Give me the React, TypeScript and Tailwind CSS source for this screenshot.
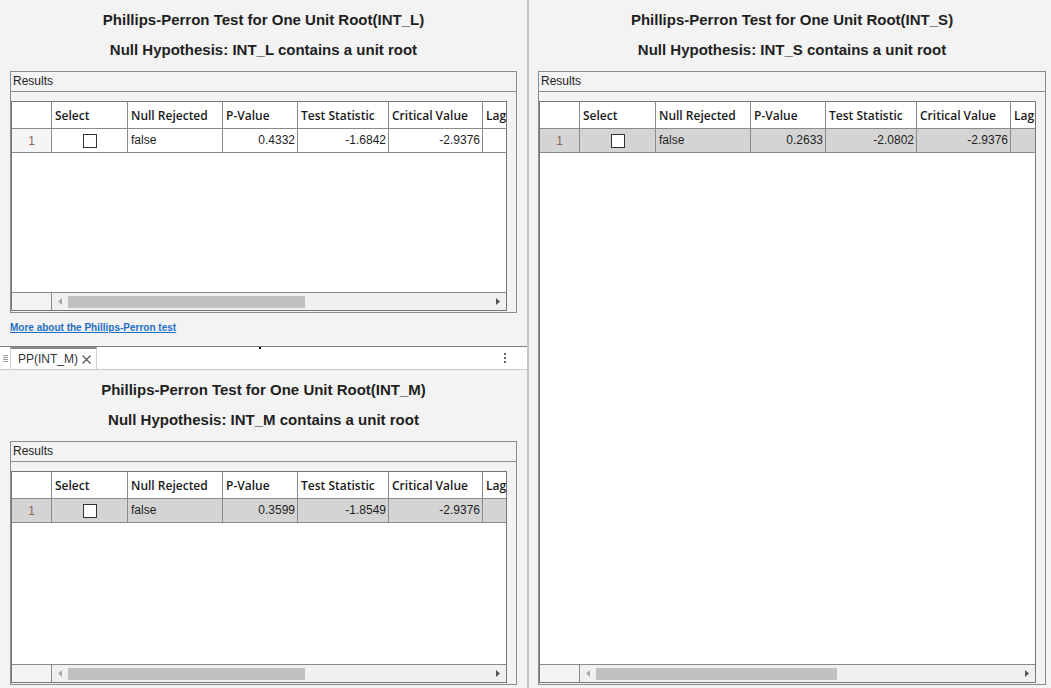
import React from "react";

const colW = ["w-[40px]", "w-[76px]", "w-[95px]", "w-[75px]", "w-[91px]", "w-[94px]", "w-[40px]"];
const headers = ["", "Select", "Null Rejected", "P-Value", "Test Statistic", "Critical Value", "Lags"];

interface Row {
  p: string;
  stat: string;
  crit: string;
}

function Checkbox() {
  return <div className="w-[14px] h-[14px] border border-[#333333] bg-white" />;
}

function ScrollBar({ thumb }: { thumb: string }) {
  return (
    <div className="flex h-[18px] shrink-0 border-t border-[#8a8a8a]">
      <div className="w-[40px] shrink-0 border-r border-[#8a8a8a] bg-[#f3f3f3]" />
      <div className="flex flex-1 min-w-0 items-center bg-[#f0f0f0]">
        <div className="flex w-[16px] shrink-0 justify-center">
          <svg width="4" height="7" viewBox="0 0 4 7">
            <path d="M4 0 L0 3.5 L4 7 Z" fill="#a8a8a8" />
          </svg>
        </div>
        <div className={`h-[12px] shrink-0 bg-[#c1c1c1] ${thumb}`} />
        <div className="flex-1" />
        <div className="flex w-[16px] shrink-0 justify-center">
          <svg width="4" height="7" viewBox="0 0 4 7">
            <path d="M0 0 L4 3.5 L0 7 Z" fill="#555555" />
          </svg>
        </div>
      </div>
    </div>
  );
}

function ResultsTable({ row, selected, thumb }: { row: Row; selected: boolean; thumb: string }) {
  const cellBg = selected ? "bg-[#d4d4d4]" : "bg-white";
  return (
    <div className="flex flex-1 min-h-0 min-w-0 flex-col border border-[#8c8c8c] bg-[#f3f3f3]">
      <div className="h-[20px] shrink-0 border-b border-[#8c8c8c] pl-[2px] text-[12px] leading-[19px] text-[#222222]">
        Results
      </div>
      <div className="mt-[9px] mb-[1px] mr-[9px] flex flex-1 min-h-0 min-w-0 flex-col overflow-hidden border border-[#777777] bg-white">
        <div className="flex h-[27px] shrink-0 border-b border-[#8a8a8a] font-['Open_Sans',sans-serif] text-[12px] font-semibold text-[#1a1a1a]">
          {headers.map((h, i) => (
            <div
              key={i}
              className={`${colW[i]} flex shrink-0 items-center overflow-hidden whitespace-nowrap border-r border-[#8a8a8a] pl-[3px] pt-[1px]`}
            >
              {h}
            </div>
          ))}
        </div>
        <div className="flex h-[24px] shrink-0 border-b border-[#8a8a8a] text-[12px] text-[#1e1e1e]">
          <div
            className={`${colW[0]} flex shrink-0 items-center justify-center border-r border-[#8a8a8a] text-[#8b6459] ${
              selected ? "bg-[#d4d4d4]" : "bg-[#f5f5f5]"
            }`}
          >
            1
          </div>
          <div className={`${colW[1]} flex shrink-0 items-center justify-center border-r border-[#8a8a8a] ${cellBg}`}>
            <Checkbox />
          </div>
          <div className={`${colW[2]} flex shrink-0 items-center border-r border-[#8a8a8a] pl-[3px] pb-[2px] ${cellBg}`}>
            false
          </div>
          <div className={`${colW[3]} flex shrink-0 items-center justify-end border-r border-[#8a8a8a] pr-[2px] pb-[2px] ${cellBg}`}>
            {row.p}
          </div>
          <div className={`${colW[4]} flex shrink-0 items-center justify-end border-r border-[#8a8a8a] pr-[2px] pb-[2px] ${cellBg}`}>
            {row.stat}
          </div>
          <div className={`${colW[5]} flex shrink-0 items-center justify-end border-r border-[#8a8a8a] pr-[2px] pb-[2px] ${cellBg}`}>
            {row.crit}
          </div>
          <div className={`${colW[6]} shrink-0 ${cellBg}`} />
        </div>
        <div className="flex-1 bg-white" />
        <ScrollBar thumb={thumb} />
      </div>
    </div>
  );
}

function Titles({ name }: { name: string }) {
  return (
    <div className="pt-[10px] text-center text-[15px] font-bold leading-[20px] text-[#1f1f1f]">
      <div>Phillips-Perron Test for One Unit Root({name})</div>
      <div className="mt-[10px]">Null Hypothesis: {name} contains a unit root</div>
    </div>
  );
}

function TabBar() {
  return (
    <div className="relative flex h-[24px] shrink-0 items-stretch border-t border-b border-t-[#7f7f7f] border-b-[#c6c6c6] bg-white">
      <div className="absolute left-[259px] top-[0px] h-[2px] w-[2px] bg-black" />
      <div className="flex w-[10px] items-center justify-center">
        <svg width="5" height="7" viewBox="0 0 5 7">
          <rect x="0" y="0" width="5" height="1" fill="#9a9a9a" />
          <rect x="0" y="2" width="5" height="1" fill="#9a9a9a" />
          <rect x="0" y="4" width="5" height="1" fill="#9a9a9a" />
          <rect x="0" y="6" width="5" height="1" fill="#9a9a9a" />
        </svg>
      </div>
      <div className="flex w-[87px] items-center gap-[4px] border-x border-t-2 border-x-[#d0d0d0] border-t-[#8a8a8a] pl-[7px] text-[12px] text-[#333333]">
        <span>PP(INT_M)</span>
        <svg width="9" height="9" viewBox="0 0 9 9">
          <path d="M0.5 0.5 L8.5 8.5 M8.5 0.5 L0.5 8.5" stroke="#555555" strokeWidth="1.2" />
        </svg>
      </div>
      <div className="flex-1" />
      <div className="flex w-[44px] flex-col items-center justify-center gap-[2px]">
        <div className="h-[2px] w-[2px] bg-[#666666]" />
        <div className="h-[2px] w-[2px] bg-[#666666]" />
        <div className="h-[2px] w-[2px] bg-[#666666]" />
      </div>
    </div>
  );
}

export default function App() {
  return (
    <div className="flex h-[688px] w-[1051px] overflow-hidden bg-[#f3f3f3] font-['Liberation_Sans',Arial,sans-serif]">
      <div className="flex w-[527px] min-w-0 shrink-0 flex-col">
        <div className="flex h-[346px] shrink-0 flex-col px-[10px]">
          <Titles name="INT_L" />
          <div className="mt-[11px] flex h-[242px] min-w-0 shrink-0 flex-col">
            <ResultsTable row={{ p: "0.4332", stat: "-1.6842", crit: "-2.9376" }} selected={false} thumb="w-[237px]" />
          </div>
          <a className="mt-[9px] self-start text-[10px] font-bold leading-[12px] text-[#1f6fc5] underline">
            More about the Phillips-Perron test
          </a>
        </div>
        <TabBar />
        <div className="flex flex-1 flex-col px-[10px] pb-[3px]">
          <Titles name="INT_M" />
          <div className="mt-[11px] flex min-w-0 flex-1 flex-col">
            <ResultsTable row={{ p: "0.3599", stat: "-1.8549", crit: "-2.9376" }} selected thumb="w-[237px]" />
          </div>
        </div>
      </div>
      <div className="w-[2px] shrink-0 bg-[#c4c4c4]" />
      <div className="flex min-w-0 flex-1 flex-col pl-[9px] pr-[5px] pb-[3px]">
        <Titles name="INT_S" />
        <div className="mt-[11px] flex min-w-0 flex-1 flex-col">
          <ResultsTable row={{ p: "0.2633", stat: "-2.0802", crit: "-2.9376" }} selected thumb="w-[241px]" />
        </div>
      </div>
    </div>
  );
}
